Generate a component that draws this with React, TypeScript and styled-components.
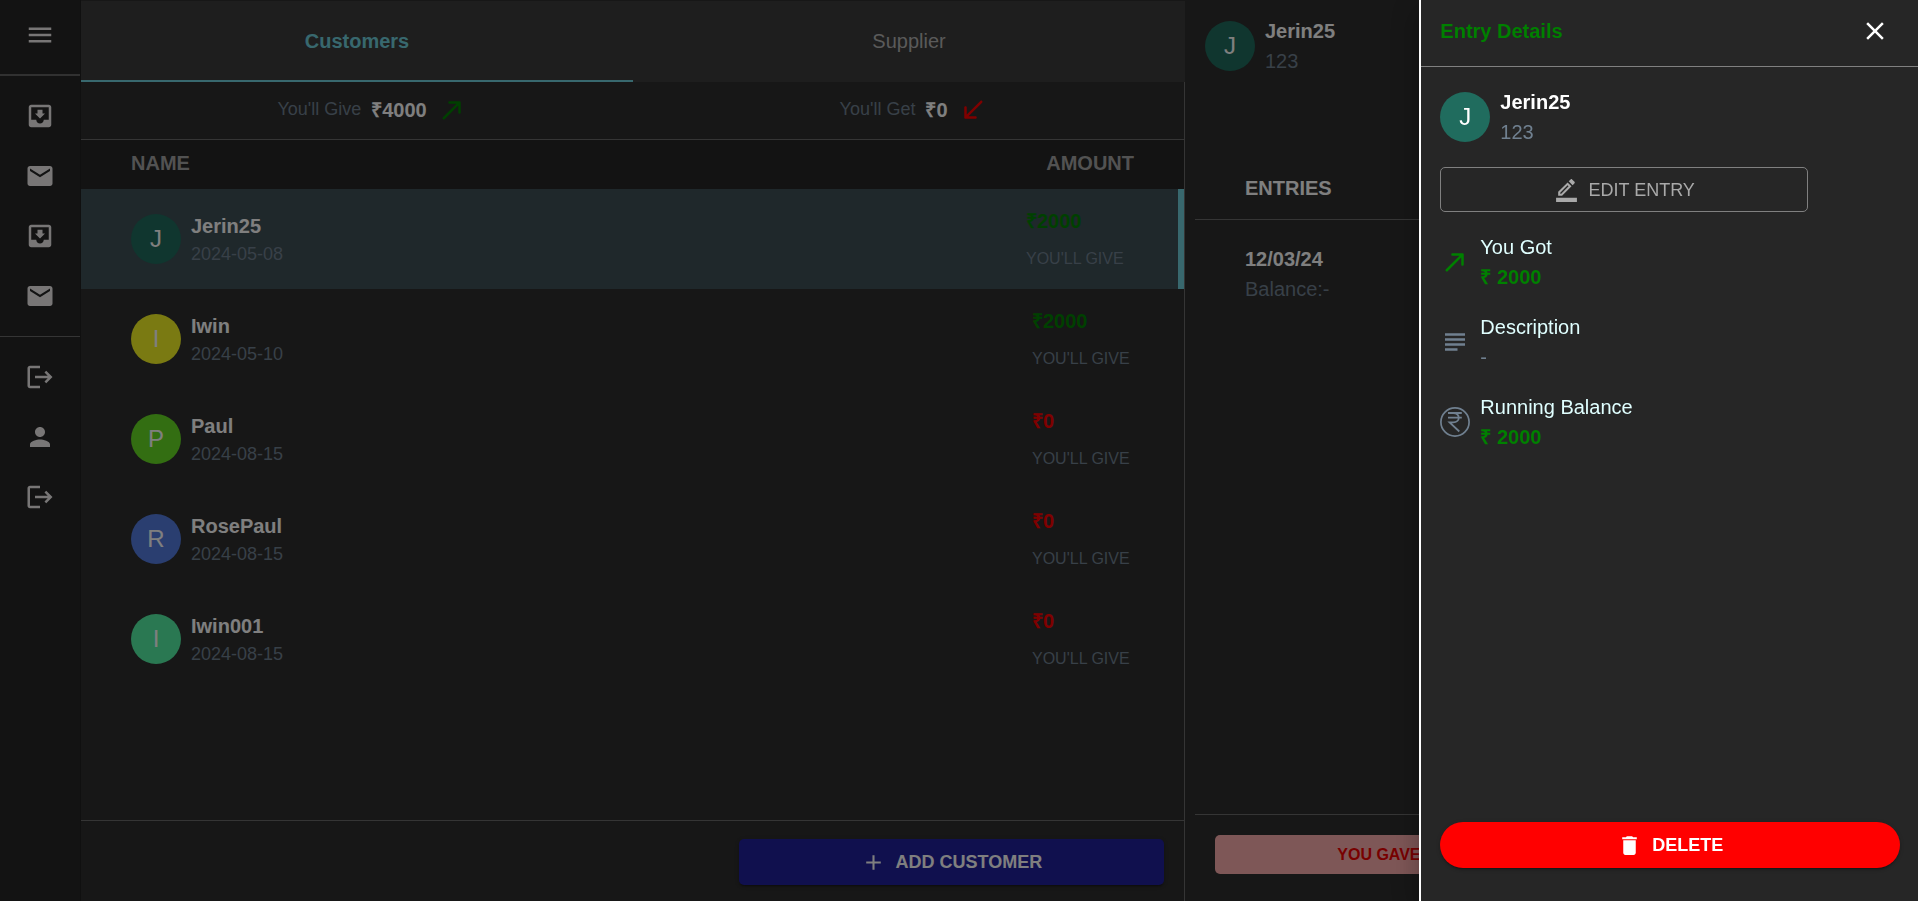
import React from "react";
import styled, { createGlobalStyle } from "styled-components";

const GlobalStyle = createGlobalStyle`
  *, *::before, *::after { box-sizing: border-box; }
  body {
    margin: 0;
    background: #262626;
    color: #fff;
    font-family: "Liberation Sans", Arial, sans-serif;
    font-size: 20px;
    line-height: 30px;
    overflow: hidden;
  }
  button { font: inherit; color: inherit; cursor: pointer; }
  h1, h2, p { margin: 0; padding: 0; }
`;

const slate = "#708090";
const line = "#6b6b6b";

const icons = {
  menu: "M3 18h18v-2H3v2zm0-5h18v-2H3v2zm0-7v2h18V6H3z",
  inbox:
    "M19 3H4.99c-1.11 0-1.98.9-1.98 2L3 19c0 1.1.88 2 1.99 2H19c1.1 0 2-.9 2-2V5c0-1.1-.9-2-2-2zm0 12h-4c0 1.66-1.35 3-3 3s-3-1.34-3-3H4.99V5H19v10zm-3-5h-2V7h-4v3H8l4 4 4-4z",
  mail: "M20 4H4c-1.1 0-1.99.9-1.99 2L2 18c0 1.1.9 2 2 2h16c1.1 0 2-.9 2-2V6c0-1.1-.9-2-2-2zm0 4-8 5-8-5V6l8 5 8-5v2z",
  logout:
    "m17 7-1.41 1.41L18.17 11H8v2h10.17l-2.58 2.58L17 17l5-5zM4 5h8V3H4c-1.1 0-2 .9-2 2v14c0 1.1.9 2 2 2h8v-2H4V5z",
  person:
    "M12 12c2.21 0 4-1.79 4-4s-1.79-4-4-4-4 1.79-4 4 1.79 4 4 4zm0 2c-2.67 0-8 1.34-8 4v2h16v-2c0-2.66-5.33-4-8-4z",
  up: "M9 6c0 .56.45 1 1 1h5.59L4.7 17.89c-.39.39-.39 1.02 0 1.41.39.39 1.02.39 1.41 0L17 8.41V14c0 .55.45 1 1 1s1-.45 1-1V6c0-.55-.45-1-1-1h-8c-.56 0-1 .45-1 1z",
  down: "M19.3 4.71c-.39-.39-1.02-.39-1.41 0L7 15.59V10c0-.55-.45-1-1-1s-1 .45-1 1v8c0 .55.45 1 1 1h8c.55 0 1-.45 1-1s-.45-1-1-1H8.41L19.3 6.11c.38-.38.38-1.02 0-1.4z",
  plus: "M19 13h-6v6h-2v-6H5v-2h6V5h2v6h6v2z",
  close:
    "M19 6.41 17.59 5 12 10.59 6.41 5 5 6.41 10.59 12 5 17.59 6.41 19 12 13.41 17.59 19 19 17.59 13.41 12z",
  edit: "m16.81 8.94-3.75-3.75L4 14.25V18h3.75l9.06-9.06zM6 16v-.92l7.06-7.06.92.92L6.92 16H6zm13.71-9.96c.39-.39.39-1.02 0-1.41l-2.34-2.34c-.39-.39-1.02-.39-1.41 0l-1.83 1.83 3.75 3.75 1.83-1.83zM2 20h20v4H2z",
  subject: "M14 17H4v2h10v-2zm6-8H4v2h16V9zM4 15h16v-2H4v2zM4 5v2h16V5H4z",
  trash: "M6 19c0 1.1.9 2 2 2h8c1.1 0 2-.9 2-2V7H6v12zM19 4h-3.5l-1-1h-5l-1 1H5v2h14V4z",
};

type IconName = keyof typeof icons;

const Glyph = styled.svg<{ $color?: string }>`
  display: block;
  flex: none;
  fill: ${(p) => p.$color ?? "currentColor"};
`;

const Icon = ({ name, size = 30, color }: { name: IconName; size?: number; color?: string }) => (
  <Glyph width={size} height={size} viewBox="0 0 24 24" $color={color} aria-hidden="true">
    <path d={icons[name]} />
  </Glyph>
);

const RupeeCircle = () => (
  <Glyph width={30} height={30} viewBox="0 0 30 30" aria-hidden="true">
    <circle cx="15" cy="15" r="14.1" fill="none" stroke={slate} strokeWidth="1.7" />
    <path
      d="M8 6H21.8M8 10.6H21.8M9 6H13.2C20.6 6 20.6 15.4 13.2 15.4H9.6L19.3 24.5"
      fill="none"
      stroke={slate}
      strokeWidth="1.8"
    />
  </Glyph>
);

const Page = styled.div`
  display: grid;
  grid-template-columns: 81px minmax(0, 1104fr) minmax(0, 733fr);
  height: 100vh;
`;

const Sidebar = styled.nav`
  display: flex;
  flex-direction: column;
  background: #262626;
  border-right: 1px solid #202020;
  color: #f0eded;
`;

const MenuBar = styled.div`
  display: grid;
  height: 76px;
  padding-bottom: 4px;
  border-bottom: 2px solid #626262;
`;

const NavGroup = styled.div`
  display: grid;
  padding: 10px 0;
  & + & { border-top: 1px solid ${line}; }
`;

const NavButton = styled.button`
  display: grid;
  place-items: center;
  height: 60px;
  border: 0;
  background: none;
  ${MenuBar} & { height: 70px; }
`;

const Customers = styled.main`
  display: flex;
  flex-direction: column;
  padding-top: 1px;
  background: #2e2e2e;
`;

const Tabs = styled.div`
  display: grid;
  grid-template-columns: 1fr 1fr;
  height: 81px;
  flex: none;
  background: #3c3c3c;
`;

const Tab = styled.button<{ $active?: boolean }>`
  border: 0;
  border-bottom: 2px solid ${(p) => (p.$active ? "#70d0dc" : "transparent")};
  background: none;
  color: ${(p) => (p.$active ? "#70d0dc" : "#b4b4b4")};
  font-weight: ${(p) => (p.$active ? 700 : 400)};
`;

const Column = styled.div`
  display: flex;
  flex-direction: column;
  flex: 1;
  min-height: 0;
  border-right: 1px solid ${line};
`;

const Summary = styled.div`
  display: flex;
  justify-content: space-around;
  height: 58px;
  padding: 0 10px 2px;
  border-bottom: 1px solid ${line};
`;

const Total = styled.p`
  display: flex;
  align-items: center;
  gap: 10px;
`;

const Muted = styled.span`
  color: ${slate};
  font-size: 18px;
  line-height: 27px;
`;

const Table = styled.table`
  width: 100%;
  border-collapse: collapse;
  font-size: 20px;
`;

const HeadCell = styled.th`
  height: 49px;
  padding: 0 50px 3px;
  background: #262626;
  color: #a4a4a4;
  text-align: left;
  &:last-child { text-align: right; }
`;

const Row = styled.tr<{ $selected?: boolean }>`
  height: 100px;
  background: ${(p) => (p.$selected ? "#3e5056" : "none")};
  box-shadow: ${(p) => (p.$selected ? "inset -6px 0 #70d0dc" : "none")};
`;

const Cell = styled.td`
  padding: 0 50px;
`;

const AmountCell = styled.td<{ $selected?: boolean }>`
  padding: 0 ${(p) => (p.$selected ? 6 : 0)}px 0 0;
`;

const AmountBox = styled.div`
  display: grid;
  gap: 10px;
  width: 152px;
  margin-left: auto;
`;

const Amount = styled.strong<{ $tone: string }>`
  color: ${(p) => p.$tone};
`;

const Direction = styled.span`
  color: ${slate};
  font-size: 16px;
  line-height: 26px;
`;

const Person = styled.div`
  display: flex;
  align-items: center;
  gap: 10px;
`;

const Avatar = styled.span<{ $color: string }>`
  display: grid;
  place-items: center;
  flex: none;
  width: 50px;
  height: 50px;
  border-radius: 50%;
  background: ${(p) => p.$color};
  font-size: 24px;
  font-weight: 400;
`;

const Lines = styled.div`
  display: grid;
`;

const Phone = styled.span`
  color: ${slate};
`;

const Footer = styled.div`
  display: flex;
  justify-content: flex-end;
  height: 81px;
  margin-top: auto;
  padding: 18px 20px 0;
  border-top: 1px solid ${line};
`;

const AddButton = styled.button`
  display: flex;
  align-items: center;
  justify-content: center;
  gap: 10px;
  width: 40%;
  height: 46px;
  border: 0;
  border-radius: 5px;
  background: #20209c;
  box-shadow: 0 3px 1px -2px rgba(0, 0, 0, 0.2), 0 2px 2px rgba(0, 0, 0, 0.14), 0 1px 5px rgba(0, 0, 0, 0.12);
  font-size: 18px;
  font-weight: 700;
`;

const Details = styled.section`
  display: flex;
  flex-direction: column;
  padding-left: 10px;
  background: #2e2e2e;
`;

const DetailsHead = styled.header`
  padding: 16px 10px;
`;

const EntriesTitle = styled.h2`
  margin-top: 66px;
  padding: 15px 50px 16px;
  border-bottom: 1px solid ${line};
  font-size: 20px;
  line-height: 30px;
`;

const Entry = styled.div`
  display: grid;
  padding: 24px 50px;
`;

const DetailsFooter = styled.div`
  margin-top: auto;
  height: 87px;
  padding: 20px;
  border-top: 1px solid ${line};
`;

const GaveButton = styled.button`
  width: 48%;
  height: 39px;
  border: 0;
  border-radius: 5px;
  background: #fdaeae;
  color: #f00000;
  font-size: 16px;
  font-weight: 700;
`;

const Backdrop = styled.div`
  position: fixed;
  inset: 0;
  background: rgba(0, 0, 0, 0.5);
`;

const Drawer = styled.aside`
  position: fixed;
  inset: 0 0 0 auto;
  display: flex;
  flex-direction: column;
  width: 26%;
  border-left: 2px solid #fff;
  background: #262626;
  box-shadow: 0 8px 10px -5px rgba(0, 0, 0, 0.2), 0 16px 24px 2px rgba(0, 0, 0, 0.14),
    0 6px 30px 5px rgba(0, 0, 0, 0.12);
`;

const DrawerHead = styled.header`
  display: flex;
  align-items: center;
  justify-content: space-between;
  height: 67px;
  padding: 0 28px 4px 19px;
  border-bottom: 1px solid #808080;
`;

const DrawerTitle = styled.h1`
  color: green;
  font-size: 20px;
  line-height: 30px;
`;

const CloseButton = styled.button`
  padding: 0;
  border: 0;
  background: none;
`;

const DrawerBody = styled.div`
  display: flex;
  flex: 1;
  flex-direction: column;
  gap: 20px;
  padding: 20px 18px 33px 19px;
`;

const EditButton = styled.button`
  display: flex;
  align-items: center;
  justify-content: center;
  gap: 10px;
  width: 80%;
  height: 45px;
  border: 1px solid #808080;
  border-radius: 5px;
  background: none;
  color: #a9a9a9;
  font-size: 18px;
`;

const Fact = styled.div`
  display: flex;
  align-items: center;
  gap: 10px;
  color: ${slate};
`;

const FactLabel = styled.span`
  color: #e0ffff;
`;

const DeleteButton = styled.button`
  display: flex;
  align-items: center;
  justify-content: center;
  gap: 10px;
  height: 46px;
  margin-top: auto;
  border: 0;
  border-radius: 25px;
  background: #f00;
  box-shadow: 0 3px 1px -2px rgba(0, 0, 0, 0.2), 0 2px 2px rgba(0, 0, 0, 0.14), 0 1px 5px rgba(0, 0, 0, 0.12);
  font-size: 18px;
  font-weight: 700;
`;

const customers = [
  { name: "Jerin25", date: "2024-05-08", amount: 2000, color: "#206c5e" },
  { name: "Iwin", date: "2024-05-10", amount: 2000, color: "#f4f424" },
  { name: "Paul", date: "2024-08-15", amount: 0, color: "#66dc24" },
  { name: "RosePaul", date: "2024-08-15", amount: 0, color: "#547ce0" },
  { name: "Iwin001", date: "2024-08-15", amount: 0, color: "#54f0a4" },
];

const navGroups: { icon: IconName; label: string }[][] = [
  [
    { icon: "inbox", label: "Inbox" },
    { icon: "mail", label: "Mail" },
    { icon: "inbox", label: "Archive" },
    { icon: "mail", label: "Messages" },
  ],
  [
    { icon: "logout", label: "Switch account" },
    { icon: "person", label: "Profile" },
    { icon: "logout", label: "Log out" },
  ],
];

const Contact = () => (
  <Person>
    <Avatar $color="#206c5e">J</Avatar>
    <Lines>
      <strong>Jerin25</strong>
      <Phone>123</Phone>
    </Lines>
  </Person>
);

export default function App() {
  return (
    <>
      <GlobalStyle />
      <Page>
        <Sidebar>
          <MenuBar>
            <NavButton aria-label="Menu">
              <Icon name="menu" />
            </NavButton>
          </MenuBar>
          {navGroups.map((group, i) => (
            <NavGroup key={i}>
              {group.map((item) => (
                <NavButton key={item.label} aria-label={item.label}>
                  <Icon name={item.icon} />
                </NavButton>
              ))}
            </NavGroup>
          ))}
        </Sidebar>

        <Customers>
          <Tabs role="tablist">
            <Tab role="tab" aria-selected="true" $active>
              Customers
            </Tab>
            <Tab role="tab" aria-selected="false">
              Supplier
            </Tab>
          </Tabs>
          <Column>
            <Summary>
              <Total>
                <Muted>You'll Give</Muted>
                <strong>₹4000</strong>
                <Icon name="up" color="green" />
              </Total>
              <Total>
                <Muted>You'll Get</Muted>
                <strong>₹0</strong>
                <Icon name="down" color="red" />
              </Total>
            </Summary>
            <Table>
              <thead>
                <tr>
                  <HeadCell>NAME</HeadCell>
                  <HeadCell>AMOUNT</HeadCell>
                </tr>
              </thead>
              <tbody>
                {customers.map((c, i) => (
                  <Row key={c.name} $selected={i === 0}>
                    <Cell>
                      <Person>
                        <Avatar $color={c.color}>{c.name[0]}</Avatar>
                        <Lines>
                          <strong>{c.name}</strong>
                          <Muted>{c.date}</Muted>
                        </Lines>
                      </Person>
                    </Cell>
                    <AmountCell $selected={i === 0}>
                      <AmountBox>
                        <Amount $tone={c.amount > 0 ? "green" : "red"}>₹{c.amount}</Amount>
                        <Direction>YOU'LL GIVE</Direction>
                      </AmountBox>
                    </AmountCell>
                  </Row>
                ))}
              </tbody>
            </Table>
            <Footer>
              <AddButton>
                <Icon name="plus" size={25} />
                ADD CUSTOMER
              </AddButton>
            </Footer>
          </Column>
        </Customers>

        <Details>
          <DetailsHead>
            <Contact />
          </DetailsHead>
          <EntriesTitle>ENTRIES</EntriesTitle>
          <Entry>
            <strong>12/03/24</strong>
            <Phone>Balance:-</Phone>
          </Entry>
          <DetailsFooter>
            <GaveButton>YOU GAVE</GaveButton>
          </DetailsFooter>
        </Details>
      </Page>

      <Backdrop />
      <Drawer aria-label="Entry Details">
        <DrawerHead>
          <DrawerTitle>Entry Details</DrawerTitle>
          <CloseButton aria-label="Close">
            <Icon name="close" />
          </CloseButton>
        </DrawerHead>
        <DrawerBody>
          <Contact />
          <EditButton>
            <Icon name="edit" size={25} />
            EDIT ENTRY
          </EditButton>
          <Fact>
            <Icon name="up" color="green" />
            <Lines>
              <FactLabel>You Got</FactLabel>
              <Amount $tone="green">₹ 2000</Amount>
            </Lines>
          </Fact>
          <Fact>
            <Icon name="subject" />
            <Lines>
              <FactLabel>Description</FactLabel>
              <span>-</span>
            </Lines>
          </Fact>
          <Fact>
            <RupeeCircle />
            <Lines>
              <FactLabel>Running Balance</FactLabel>
              <Amount $tone="green">₹ 2000</Amount>
            </Lines>
          </Fact>
          <DeleteButton>
            <Icon name="trash" size={25} />
            DELETE
          </DeleteButton>
        </DrawerBody>
      </Drawer>
    </>
  );
}
